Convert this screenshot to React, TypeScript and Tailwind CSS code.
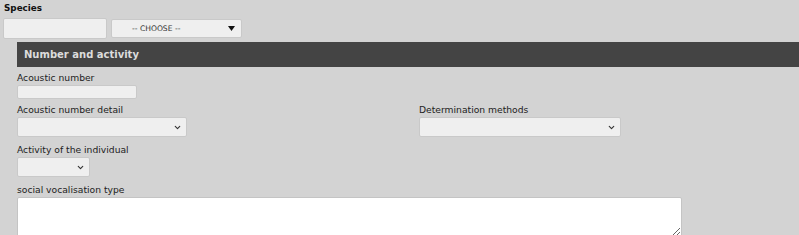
import { ChevronDown } from 'lucide-react';

const font = { fontFamily: '"DejaVu Sans", Verdana, sans-serif' };

function Field({ label, children }: { label: string; children: React.ReactNode }) {
  return (
    <div className="flex flex-col">
      <label className="h-[14px] text-[9.2px] leading-[14px] text-[#222]">{label}</label>
      {children}
    </div>
  );
}

function FakeSelect({ width }: { width: string }) {
  return (
    <div
      className={`${width} flex h-[20px] items-center justify-end rounded-[2px] border border-[#c9c9c9] bg-[#efefef] pr-[4px]`}
    >
      <ChevronDown className="h-[9px] w-[9px] text-[#333]" strokeWidth={3} />
    </div>
  );
}

export default function App() {
  return (
    <div className="h-[235px] w-full overflow-hidden bg-[#d3d3d3] text-[#222]" style={font}>
      {/* Species */}
      <div className="px-[4px] pt-[1px] text-[8.8px] font-bold leading-[14px] text-[#111]">Species</div>
      <div className="mt-[3px] flex items-start gap-[4px] pl-[3px]">
        <input className="h-[21px] w-[104px] rounded-[2px] border border-[#c9c9c9] bg-[#efefef] outline-none" />
        <div className="mt-[1px] flex h-[19px] w-[131px] items-center justify-between rounded-[2px] border border-[#c9c9c9] bg-[#efefef] pl-[20px] pr-[6px]">
          <span className="text-[7.6px] text-[#333]">-- CHOOSE --</span>
          <svg width="7" height="5" viewBox="0 0 7 5">
            <path d="M0 0 L7 0 L3.5 5 Z" fill="#111" />
          </svg>
        </div>
      </div>

      {/* Number and activity */}
      <div className="ml-[17px] mt-[3px]">
        <div className="flex h-[25px] items-center bg-[#444444] px-[7px] text-[10px] font-bold text-[#dcdcdc]">
          Number and activity
        </div>
        <div className="flex flex-col pt-[4px]">
          <Field label="Acoustic number">
            <input className="h-[14px] w-[120px] rounded-[2px] border border-[#c9c9c9] bg-[#efefef] outline-none" />
          </Field>
          <div className="mt-[4px] grid grid-cols-[402px_1fr]">
            <Field label="Acoustic number detail">
              <FakeSelect width="w-[170px]" />
            </Field>
            <Field label="Determination methods">
              <FakeSelect width="w-[202px]" />
            </Field>
          </div>
          <div className="mt-[6px]">
            <Field label="Activity of the individual">
              <FakeSelect width="w-[73px]" />
            </Field>
          </div>
          <div className="mt-[6px]">
            <Field label="social vocalisation type">
              <textarea className="block h-[40px] w-[665px] resize rounded-[2px] border border-[#c4c4c4] bg-white outline-none" />
            </Field>
          </div>
        </div>
      </div>
    </div>
  );
}
